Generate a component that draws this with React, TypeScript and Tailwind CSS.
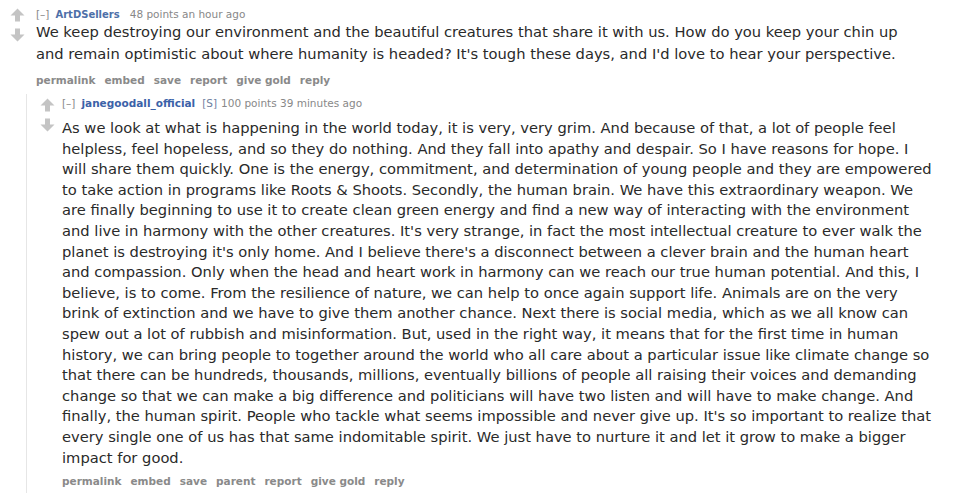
const topLines = [
  "We keep destroying our environment and the beautiful creatures that share it with us. How do you keep your chin up",
  "and remain optimistic about where humanity is headed? It's tough these days, and I'd love to hear your perspective.",
];

const replyLines = [
  "As we look at what is happening in the world today, it is very, very grim. And because of that, a lot of people feel",
  "helpless, feel hopeless, and so they do nothing. And they fall into apathy and despair. So I have reasons for hope. I",
  "will share them quickly. One is the energy, commitment, and determination of young people and they are empowered",
  "to take action in programs like Roots & Shoots. Secondly, the human brain. We have this extraordinary weapon. We",
  "are finally beginning to use it to create clean green energy and find a new way of interacting with the environment",
  "and live in harmony with the other creatures. It's very strange, in fact the most intellectual creature to ever walk the",
  "planet is destroying it's only home. And I believe there's a disconnect between a clever brain and the human heart",
  "and compassion. Only when the head and heart work in harmony can we reach our true human potential. And this, I",
  "believe, is to come. From the resilience of nature, we can help to once again support life. Animals are on the very",
  "brink of extinction and we have to give them another chance. Next there is social media, which as we all know can",
  "spew out a lot of rubbish and misinformation. But, used in the right way, it means that for the first time in human",
  "history, we can bring people to together around the world who all care about a particular issue like climate change so",
  "that there can be hundreds, thousands, millions, eventually billions of people all raising their voices and demanding",
  "change so that we can make a big difference and politicians will have two listen and will have to make change. And",
  "finally, the human spirit. People who tackle what seems impossible and never give up. It's so important to realize that",
  "every single one of us has that same indomitable spirit. We just have to nurture it and let it grow to make a bigger",
  "impact for good.",
];

function Arrow({ down }: { down?: boolean }) {
  return (
    <svg width="15" height="14" viewBox="0 0 15 14" className={down ? "rotate-180" : ""}>
      <path d="M7.5 0.5L14.5 7.5H10V13.5H5V7.5H0.5Z" fill="#c4c4c4" />
    </svg>
  );
}

function Actions({ items }: { items: string[] }) {
  return (
    <div className="flex gap-[9px] text-[10.5px] font-bold text-[#8a8a8a] h-[22px] items-center">
      {items.map((i) => (
        <span key={i}>{i}</span>
      ))}
    </div>
  );
}

export default function App() {
  return (
    <div className="w-[980px] h-[495px] overflow-hidden bg-white font-['DejaVu_Sans',sans-serif] text-[#2a2a2a] pl-[10px] pt-[8px]">
      {/* top level comment */}
      <div className="flex">
        <div className="flex flex-col gap-[6px] w-[26px]">
          <Arrow />
          <Arrow down />
        </div>
        <div>
          <div className="flex items-center h-[13px] text-[10.5px] text-[#888]">
            <span>[–]</span>
            <span className="ml-[6px] text-[10px] font-bold text-[#4d6fa8]">ArtDSellers</span>
            <span className="ml-[10px]">48 points an hour ago</span>
          </div>
          <div className="text-[14.7px] leading-[22px] whitespace-nowrap">
            {topLines.map((l) => (
              <div key={l}>{l}</div>
            ))}
          </div>
          <div className="pt-[5px]">
            <Actions items={["permalink", "embed", "save", "report", "give gold", "reply"]} />
          </div>
        </div>
      </div>

      {/* reply */}
      <div className="ml-[16px] mt-[2px] border-l border-[#e6e6e6] pl-[13px] flex">
        <div className="flex flex-col gap-[6px] w-[22px] pt-[4px]">
          <Arrow />
          <Arrow down />
        </div>
        <div>
          <div className="flex items-center h-[20px] text-[10.5px] text-[#888]">
            <span>[–]</span>
            <span className="ml-[6px] font-bold text-[#3b62a8]">janegoodall_official</span>
            <span className="ml-[7px] text-[#6f7fa0]">[S]</span>
            <span className="ml-[4px]">100 points 39 minutes ago</span>
          </div>
          <div className="mt-[4px] text-[14.7px] leading-[20.6px] whitespace-nowrap">
            {replyLines.map((l) => (
              <div key={l}>{l}</div>
            ))}
          </div>
          <div className="pt-[3px]">
            <Actions items={["permalink", "embed", "save", "parent", "report", "give gold", "reply"]} />
          </div>
        </div>
      </div>
    </div>
  );
}
